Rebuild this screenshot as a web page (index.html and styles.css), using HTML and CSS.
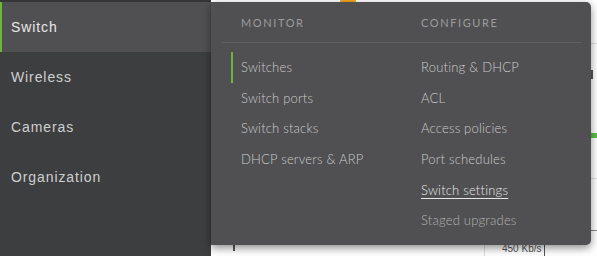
FILE: index.html
```html
<!DOCTYPE html>
<html lang="en">

<head>
    <meta charset="utf-8">
    <meta name="viewport" content="width=device-width, initial-scale=1.0">
    <title>Switch menu</title>
    <link rel="stylesheet" href="styles.css">
</head>

<body>
    <div class="page">
        <nav class="sidebar">
            <a class="side_item side_active" href="#">Switch</a>
            <a class="side_item" href="#">Wireless</a>
            <a class="side_item" href="#">Cameras</a>
            <a class="side_item" href="#">Organization</a>
        </nav>

        <main class="content">
            <span class="blip"></span>
            <span class="edge edge_1"></span>
            <span class="edge edge_2"></span>
            <span class="edge edge_green"></span>
            <span class="edge edge_3"></span>
            <span class="edge edge_4"></span>
            <span class="tick"></span>
            <span class="rate">450 Kb/s</span>
        </main>

        <div class="menu">
            <div class="menu_head">
                <h3>Monitor</h3>
                <h3>Configure</h3>
            </div>
            <div class="menu_cols">
                <ul class="menu_list">
                    <li class="menu_active"><a href="#">Switches</a></li>
                    <li><a href="#">Switch ports</a></li>
                    <li><a href="#">Switch stacks</a></li>
                    <li><a href="#">DHCP servers &amp; ARP</a></li>
                </ul>
                <ul class="menu_list">
                    <li><a href="#">Routing &amp; DHCP</a></li>
                    <li><a href="#">ACL</a></li>
                    <li><a href="#">Access policies</a></li>
                    <li><a href="#">Port schedules</a></li>
                    <li><a class="menu_hover" href="#">Switch settings</a></li>
                    <li><a class="menu_dim" href="#">Staged upgrades</a></li>
                </ul>
            </div>
        </div>
    </div>
</body>

</html>
```

FILE: styles.css
```css
* {
    box-sizing: border-box;
    margin: 0;
    padding: 0;
}

body {
    background: white;
    overflow: hidden;
    font-family: 'Lato', sans-serif;
}

.page {
    display: flex;
    height: 256px;
    position: relative;
}

/* sidebar */

.sidebar {
    width: 211px;
    flex-shrink: 0;
    background-color: #3d3e40;
    border-top: 2px solid #343537;
    display: flex;
    flex-direction: column;
}

.side_item {
    display: flex;
    align-items: center;
    height: 50px;
    padding-left: 11px;
    color: #cfcfcf;
    text-decoration: none;
    font-family: 'Liberation Sans', Arial, sans-serif;
    font-size: 14px;
    letter-spacing: 0.9px;
}

.side_active {
    background-color: #505052;
    border-left: 2px solid #6cb543;
    padding-left: 9px;
    color: #e8e8e8;
}

/* page behind the menu */

.content {
    flex: 1;
    position: relative;
    background: white;
}

.blip {
    position: absolute;
    left: 129px;
    top: 0;
    width: 16px;
    height: 3px;
    border-radius: 0 0 3px 3px;
    background: #f0a41c;
}

.edge {
    position: absolute;
    right: 0;
    width: 8px;
    height: 1px;
    background: #e2e2e2;
}

.edge_1 { top: 43px; }
.edge_2 { top: 70px; height: 9px; width: 2px; background: #555; right: 4px; }
.edge_green { top: 133px; height: 5px; width: 6px; background: #5fbf4e; }
.edge_3 { top: 178px; }
.edge_4 { top: 230px; width: 14px; background: #888; }

.tick {
    position: absolute;
    left: 22px;
    top: 245px;
    width: 2px;
    height: 6px;
    background: #555;
}

.rate {
    position: absolute;
    left: 273px;
    top: 242px;
    padding: 0 3px 0 17px;
    border-left: 1px solid #ddd;
    border-right: 1px solid #555;
    font-family: 'Liberation Sans', Arial, sans-serif;
    font-size: 10px;
    line-height: 14px;
    color: #555;
}

/* mega menu */

.menu {
    position: absolute;
    left: 211px;
    top: 2px;
    width: 380px;
    height: 243px;
    background-color: #505052;
    border-radius: 0 5px 5px 0;
    box-shadow: 0 3px 8px rgba(0, 0, 0, 0.45);
}

.menu_head {
    display: grid;
    grid-template-columns: 180px 1fr;
    height: 41px;
    align-items: center;
    margin: 0 10px;
    padding-left: 20px;
    border-bottom: 1px solid #616163;
}

.menu_head h3 {
    font-size: 11px;
    font-weight: normal;
    text-transform: uppercase;
    letter-spacing: 1.6px;
    color: #9c9c9c;
}

.menu_cols {
    display: grid;
    grid-template-columns: 180px 1fr;
    padding: 9px 0 0 20px;
}

.menu_list {
    list-style: none;
}

.menu_list li {
    height: 30.6px;
    display: flex;
    align-items: center;
    padding-left: 8px;
    border-left: 2px solid transparent;
}

.menu_list .menu_active {
    border-left-color: #6cb543;
}

.menu_list a {
    color: #cacaca;
    text-decoration: none;
    font-size: 13px;
    font-weight: 300;
    letter-spacing: 0.2px;
}

.menu_list .menu_hover {
    color: #e6e6e6;
    text-decoration: underline;
    text-underline-offset: 3px;
    text-decoration-thickness: 1px;
}

.menu_list .menu_dim {
    color: #b0b0b0;
}
```
